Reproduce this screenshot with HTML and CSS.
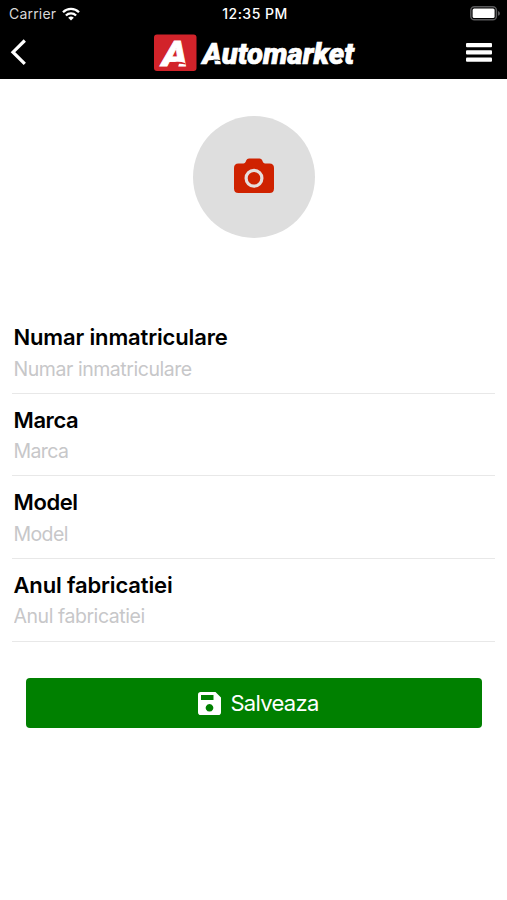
FILE: index.html
```html
<!DOCTYPE html>
<html lang="ro">
<head>
    <meta charset="UTF-8">
    <title>Automarket</title>
    <link rel="stylesheet" href="styles.css">
</head>
<body>
    <header class="header">
        <div class="status">
            <div class="carrier">
                <span>Carrier</span>
                <svg class="wifi" width="18" height="14" viewBox="0 0 18 14" fill="none" stroke="#fff" stroke-width="2.3">
                    <path d="M1 5.2a11.3 11.3 0 0 1 16 0"/>
                    <path d="M3.900 8.500a7.200 7.200 0 0 1 10.200 0"/>
                    <path d="M9 13.600L6.200 10.800a4 4 0 0 1 5.600 0z" fill="#fff" stroke="none"/>
                </svg>
            </div>
            <span class="time">12:35 PM</span>
            <svg class="battery" width="31" height="15" viewBox="0 0 31 15">
                <rect x=".8" y=".8" width="25.600" height="13" rx="3.600" fill="none" stroke="#59595b" stroke-width="1.500"/>
                <rect x="2.600" y="2.600" width="22" height="9.400" rx="1.500" fill="#fff"/>
                <path d="M28 5v4.800q2-.8 2-2.400t-2-2.400z" fill="#59595b"/>
            </svg>
        </div>
        <nav class="nav">
            <svg class="back" width="18" height="28" viewBox="0 0 18 28" fill="none" stroke="#fff" stroke-width="3.200">
                <path d="M14.800 1.500L3 13.200l11.800 11.700"/>
            </svg>
            <svg class="logo" width="220" height="50" viewBox="0 0 220 50">
                <rect x="8" y="6.500" width="42.500" height="36.500" rx="3" fill="#d2232a"/>
                <text class="logo-a" x="16" y="37.500" textLength="25.500" lengthAdjust="spacingAndGlyphs">A</text>
                <path d="M25 38.500q1.500-4.500 6-4.700 4-.2 8.500 1.400v1.200q-3.500-.8-6.500-.6l-1 2.700z" fill="#d2232a"/>
                <text class="logo-name" x="56.500" y="35.700" textLength="151.500" lengthAdjust="spacingAndGlyphs">Automarket</text>
                <path d="M62.500 34.500q5-4 13-1.500" fill="none" stroke="#000" stroke-width="1"/>
            </svg>
            <svg class="menu" width="26" height="20" viewBox="0 0 26 20" fill="#fff">
                <rect y="0" width="26" height="4.200" rx="1"/>
                <rect y="7.300" width="26" height="4.200" rx="1"/>
                <rect y="14.600" width="26" height="4.200" rx="1"/>
            </svg>
        </nav>
    </header>

    <main>
        <div class="photo">
            <svg width="40" height="36" viewBox="0 0 40 36">
                <path d="M4.500 5.500H9.500Q11 5.500 11.700 3.800L12.300 2.200Q13 .5 15 .5h10.500q2 0 2.700 1.700l.6 1.600q.7 1.700 2.200 1.700h4.500Q40 5.500 40 10V30.500Q40 35 35.500 35h-31Q0 35 0 30.500V10q0-4.500 4.500-4.500z" fill="#cf2200"/>
                <circle cx="20" cy="20.200" r="7.900" fill="none" stroke="#e6dedc" stroke-width="3.200"/>
            </svg>
        </div>

        <form class="form">
            <div class="field">
                <label for="numar">Numar inmatriculare</label>
                <input id="numar" type="text" placeholder="Numar inmatriculare">
            </div>
            <div class="field">
                <label class="short" for="marca">Marca</label>
                <input class="short" id="marca" type="text" placeholder="Marca">
            </div>
            <div class="field">
                <label class="short" for="model">Model</label>
                <input class="short" id="model" type="text" placeholder="Model">
            </div>
            <div class="field">
                <label for="anul">Anul fabricatiei</label>
                <input id="anul" type="text" placeholder="Anul fabricatiei">
            </div>
            <button class="save" type="button">
                <svg width="23" height="23" viewBox="0 0 23 23">
                    <path fill-rule="evenodd" fill="#fff" d="M2.800 0H17.500L23 5.500V20.200Q23 23 20.200 23H2.800Q0 23 0 20.200V2.800Q0 0 2.800 0zM3 3v5h12.500V3zM11.500 12a3.800 3.800 0 1 0 .01 0z"/>
                </svg>
                <span>Salveaza</span>
            </button>
        </form>
    </main>
</body>
</html>
```
FILE: styles.css
```css
*{
    margin: 0;
    padding: 0;
    box-sizing: border-box;
}
body{
    background: #fff;
    font-family: Inter, "Liberation Sans", sans-serif;
}
.header{
    height: 79px;
    background: #000;
    color: #fff;
}
.status{
    display: grid;
    grid-template-columns: 1fr auto 1fr;
    align-items: center;
    height: 27px;
    padding: 0 6px 0 9px;
    font-size: 14px;
}
.carrier{
    display: flex;
    align-items: center;
    gap: 6px;
    color: #d8d8d8;
    letter-spacing: .2px;
}
.time{
    font-size: 14px;
    font-weight: 500;
    letter-spacing: .5px;
}
.battery{
    justify-self: end;
}
.nav{
    display: flex;
    align-items: center;
    justify-content: space-between;
    height: 51px;
    padding: 0 15px 0 10px;
}
.logo{
    margin-left: 17px;
}
.logo-a, .logo-name{
    font-family: Roboto, "Liberation Sans", sans-serif;
    font-weight: 900;
    font-style: italic;
    fill: #fff;
    stroke: #fff;
}
.logo-a{
    font-size: 35px;
    stroke-width: .8px;
}
.logo-name{
    font-size: 30px;
    stroke-width: .7px;
}
.photo{
    display: flex;
    align-items: center;
    justify-content: center;
    width: 122px;
    height: 122px;
    margin: 37px auto 0;
    padding-bottom: 3px;
    border-radius: 50%;
    background: #dedede;
}
.form{
    padding: 73px 12px 0;
}
.field{
    display: flex;
    flex-direction: column;
    height: 82.670px;
    padding: 12px 0 0 1.500px;
    border-bottom: 1px solid #e8e8e8;
}
.field label{
    font-size: 22px;
    font-weight: 600;
    line-height: 28px;
    letter-spacing: -.15px;
}
.field input{
    height: 26px;
    margin-top: 4.500px;
    border: 0;
    outline: 0;
    background: none;
    font-family: inherit;
    font-size: 19.500px;
    letter-spacing: -.45px;
}
.field label.short{
    letter-spacing: -.4px;
}
.field input.short{
    letter-spacing: -.6px;
}
.field input::placeholder{
    color: #c7c7c9;
}
.save{
    display: flex;
    align-items: center;
    justify-content: center;
    gap: 9px;
    width: 456px;
    height: 50px;
    margin: 36px 0 0 14px;
    padding: 1px 0 0 9px;
    border: 0;
    border-radius: 4px;
    background: #008000;
    color: #fff;
    font-family: inherit;
    font-size: 22px;
    letter-spacing: -.7px;
}
```
